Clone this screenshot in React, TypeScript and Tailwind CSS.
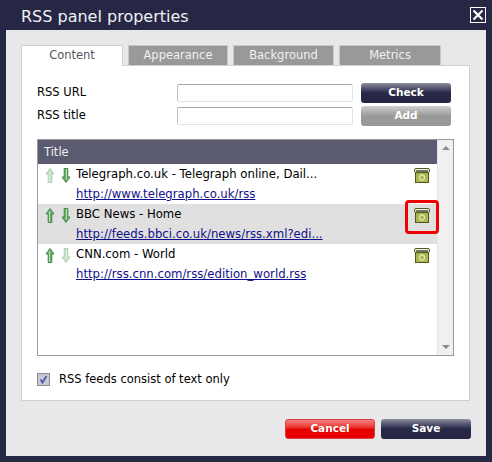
const feeds = [
  { title: "Telegraph.co.uk - Telegraph online, Dail...", url: "http://www.telegraph.co.uk/rss", up: false, down: true, shaded: false },
  { title: "BBC News - Home", url: "http://feeds.bbci.co.uk/news/rss.xml?edi...", up: true, down: true, shaded: true },
  { title: "CNN.com - World", url: "http://rss.cnn.com/rss/edition_world.rss", up: true, down: false, shaded: false },
];

function Arrow({ dir, on }: { dir: "up" | "down"; on: boolean }) {
  return (
    <svg width="10" height="15" viewBox="0 0 10 15" className={on ? "" : "opacity-40"}>
      <g transform={dir === "down" ? "rotate(180 5 7.5)" : undefined}>
        <path d="M5 0.5 L9 6 L6.8 6 L6.8 14.5 L3.2 14.5 L3.2 6 L1 6 Z" fill="#6fae6f" stroke="#3f8a45" strokeWidth="1" />
        <path d="M4.5 3.5 L4.5 14" stroke="#b8e0b8" strokeWidth="1" />
      </g>
    </svg>
  );
}

function Bin() {
  return (
    <svg width="16" height="15" viewBox="0 0 16 15">
      <rect x="1.5" y="4.5" width="13" height="10" fill="#acb552" stroke="#4f5a20" />
      <rect x="0.5" y="0.5" width="15" height="4" rx="1.5" fill="#f2f2e8" stroke="#4f5a20" />
      <rect x="2" y="2" width="12" height="2" fill="#74785e" />
      <circle cx="8" cy="9.5" r="2.5" fill="none" stroke="#dfe4ab" strokeWidth="1.3" />
    </svg>
  );
}

export default function App() {
  return (
    <div className="w-[492px] h-[462px] overflow-hidden bg-[#262645] font-['DejaVu_Sans',sans-serif] flex flex-col">
      <div className="h-[30px] shrink-0 flex items-center justify-between pl-[21px] pr-[6px] text-[#f1f1f4]">
        <span className="text-[16px] leading-[30px] pt-[3px]">RSS panel properties</span>
        <div className="w-4 h-4 border border-white flex items-center justify-center">
          <svg width="12" height="12" viewBox="0 0 12 12">
            <path d="M1.5 1.5 L10.5 10.5 M10.5 1.5 L1.5 10.5" stroke="white" strokeWidth="2.2" />
          </svg>
        </div>
      </div>

      <div className="relative mx-[6px] h-[426px] bg-[#e8e8ea] pl-[15px] pr-[16px] pt-[15px]">
        <div className="flex gap-[5px] h-5">
          <div className="w-[102px] h-[21px] z-10 bg-white border border-b-0 border-[#d0d0d0] flex items-center justify-center text-[11.5px] text-[#55555f]">
            Content
          </div>
          <div className="w-[100px] h-5 bg-[#999999] border border-b-0 border-[#c8c8c8] flex items-center justify-center text-[11.5px] text-[#f0f0f0]">
            Appearance
          </div>
          <div className="w-[101px] h-5 bg-[#999999] border border-b-0 border-[#c8c8c8] flex items-center justify-center text-[11.5px] text-[#f0f0f0]">
            Background
          </div>
          <div className="w-[102px] h-5 bg-[#999999] border border-b-0 border-[#c8c8c8] flex items-center justify-center text-[11.5px] text-[#f0f0f0]">
            Metrics
          </div>
        </div>

        <div className="h-[336px] bg-white border border-[#d0d0d0] px-[15px]">
          <div className="flex items-start pt-[17px] pr-[2px] h-[73px]">
            <div className="w-[140px] text-[11.5px] text-black">
              <div className="h-[23px] leading-[18px]">RSS URL</div>
              <div className="h-[20px] leading-[18px]">RSS title</div>
            </div>
            <div className="flex flex-col gap-[5px] pt-[1px]">
              <div className="w-[176px] h-[18px] rounded-[2px] border border-[#e2e2ea] border-t-[#a8a8b0] border-l-[#c0c0c8]" />
              <div className="w-[176px] h-[18px] rounded-[2px] border border-[#e2e2ea] border-t-[#a8a8b0] border-l-[#c0c0c8]" />
            </div>
            <div className="flex flex-col gap-[3px] ml-[8px]">
              <div className="w-[90px] h-5 rounded-[3px] bg-gradient-to-b from-[#8f8fa3] via-[#262645] to-[#262645] flex items-center justify-center text-[10.5px] font-bold text-white">
                Check
              </div>
              <div className="w-[90px] h-5 rounded-[3px] bg-gradient-to-b from-[#d0d0d0] via-[#999999] to-[#999999] flex items-center justify-center text-[10.5px] font-bold text-white">
                Add
              </div>
            </div>
          </div>

          <div className="flex h-[217px] border border-[#9a9a9a]">
            <div className="flex-1 min-w-0">
              <div className="h-[24px] bg-[#5a5a70] text-[11.5px] text-[#f0f0f0] leading-[25px] pl-[6px]">Title</div>
              {feeds.map((f) => (
                <div key={f.url} className={`flex h-10 pl-[7px] pr-[7px] ${f.shaded ? "bg-[#e0e0e0]" : "bg-white"}`}>
                  <div className="flex gap-[6px] w-[31px] pt-[4px]">
                    <Arrow dir="up" on={f.up} />
                    <Arrow dir="down" on={f.down} />
                  </div>
                  <div className="flex-1 text-[11.7px] pt-[1px]">
                    <div className="h-[20px] leading-[18px] text-black">{f.title}</div>
                    <a className="block leading-[18px] text-[#10108a] underline">{f.url}</a>
                  </div>
                  <div className="pt-[4px]">
                    <Bin />
                  </div>
                </div>
              ))}
            </div>
            <div className="w-4 bg-[#f0f0f0] border-l border-[#e4e4e4] flex flex-col items-center justify-between py-[6px]">
              <div className="w-0 h-0 border-x-[4px] border-x-transparent border-b-[4px] border-b-[#8a8a8a]" />
              <div className="w-0 h-0 border-x-[4px] border-x-transparent border-t-[4px] border-t-[#8a8a8a]" />
            </div>
          </div>

          <div className="flex items-center gap-[9px] mt-[15px]">
            <div className="w-[13px] h-[13px] border border-[#8a8a90] bg-[#c8c8d4] flex items-center justify-center">
              <svg width="9" height="9" viewBox="0 0 9 9">
                <path d="M1.5 4.5 L3.5 7.5 L7.5 1" fill="none" stroke="#4a5aa8" strokeWidth="1.8" />
              </svg>
            </div>
            <span className="text-[11.5px] text-black">RSS feeds consist of text only</span>
          </div>
        </div>

        <div className="flex justify-end gap-[6px] mt-[18px] -mr-px">
          <div className="w-[90px] h-5 rounded-[3px] border border-[#d84040] bg-gradient-to-b from-[#f08080] via-[#e60000] to-[#e60000] flex items-center justify-center text-[10.5px] font-bold text-white">
            Cancel
          </div>
          <div className="w-[90px] h-5 rounded-[3px] bg-gradient-to-b from-[#8f8fa3] via-[#262645] to-[#262645] flex items-center justify-center text-[10.5px] font-bold text-white">
            Save
          </div>
        </div>

        <div className="absolute left-[399px] top-[170px] w-[34px] h-[34px] rounded-[4px] border-[3px] border-[#f00000]" />
      </div>
    </div>
  );
}
